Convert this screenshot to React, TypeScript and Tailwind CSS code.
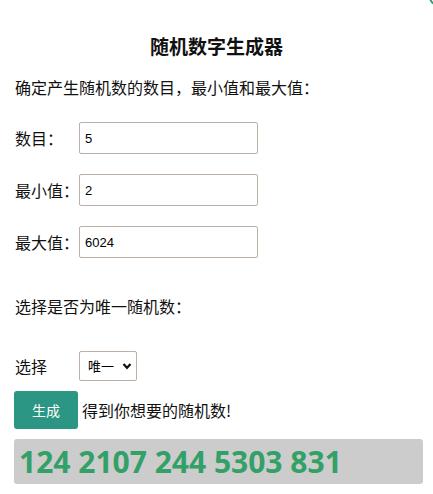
import { useState } from "react";

const cjk = "font-['Microsoft_YaHei','Noto_Sans_CJK_SC',sans-serif]";

export default function App() {
  const [count, setCount] = useState("5");
  const [min, setMin] = useState("2");
  const [max, setMax] = useState("6024");
  const [unique, setUnique] = useState("unique");

  const fields = [
    { label: "数目：", value: count, set: setCount },
    { label: "最小值：", value: min, set: setMin },
    { label: "最大值：", value: max, set: setMax },
  ];

  return (
    <div
      className={`relative w-[433px] h-[494px] overflow-hidden bg-white px-[14px] text-[#111] ${cjk}`}
    >
      {/* corner of a green badge peeking in */}
      <div className="absolute -right-[14px] -top-[12px] h-[18px] w-[18px] rounded-full border-[2px] border-[#2f9e6e]" />

      <h3 className="pt-[34px] text-center text-[19px] font-bold leading-[24px]">
        随机数字生成器
      </h3>
      <p className="mt-[17px] pl-px text-[16px] leading-[24px]">
        确定产生随机数的数目，最小值和最大值：
      </p>

      <div className="mt-[23px] flex flex-col gap-[20px]">
        {fields.map((f) => (
          <div key={f.label} className="flex items-center">
            <label className="w-[65px] pl-px text-[16px] leading-[24px]">
              {f.label}
            </label>
            <input
              type="text"
              value={f.value}
              onChange={(e) => f.set(e.target.value)}
              className="h-[32px] w-[179px] rounded-[2px] border border-[#bcb0a6] px-[5px] font-['Liberation_Sans',Arial,sans-serif] text-[13px] text-black outline-none"
            />
          </div>
        ))}
      </div>

      <p className="mt-[36px] pl-px text-[16px] leading-[24px]">
        选择是否为唯一随机数：
      </p>

      <div className="mt-[33px] flex items-center">
        <label className="w-[65px] pl-px text-[16px] leading-[24px]">选择</label>
        <div className="relative">
          <select
            value={unique}
            onChange={(e) => setUnique(e.target.value)}
            className="h-[30px] w-[58px] appearance-none rounded-[2px] border border-[#bcb0a6] bg-white pl-[8px] text-[13px] text-black outline-none"
          >
            <option value="unique">唯一</option>
            <option value="repeat">可重复</option>
          </select>
          <svg
            viewBox="0 0 10 10"
            className="pointer-events-none absolute right-[5px] top-[10px] h-[10px] w-[10px]"
          >
            <path d="M1.5 3 L5 6.8 L8.5 3" fill="none" stroke="#111" strokeWidth="2.2" />
          </svg>
        </div>
      </div>

      <div className="mt-[10px] flex items-center gap-[4px]">
        <button className="h-[38px] w-[64px] rounded-[3px] bg-[#2b9683] text-[14px] text-white">
          生成
        </button>
        <span className="text-[16px] leading-[24px]">得到你想要的随机数!</span>
      </div>

      <div className="mt-[10px] flex h-[45px] w-[409px] items-center rounded-[3px] bg-[#cccccc] px-[5px]">
        <span className="font-['Open_Sans','Noto_Sans',sans-serif] text-[30px] font-bold leading-none text-[#32a067]">
          124 2107 244 5303 831
        </span>
      </div>
    </div>
  );
}
